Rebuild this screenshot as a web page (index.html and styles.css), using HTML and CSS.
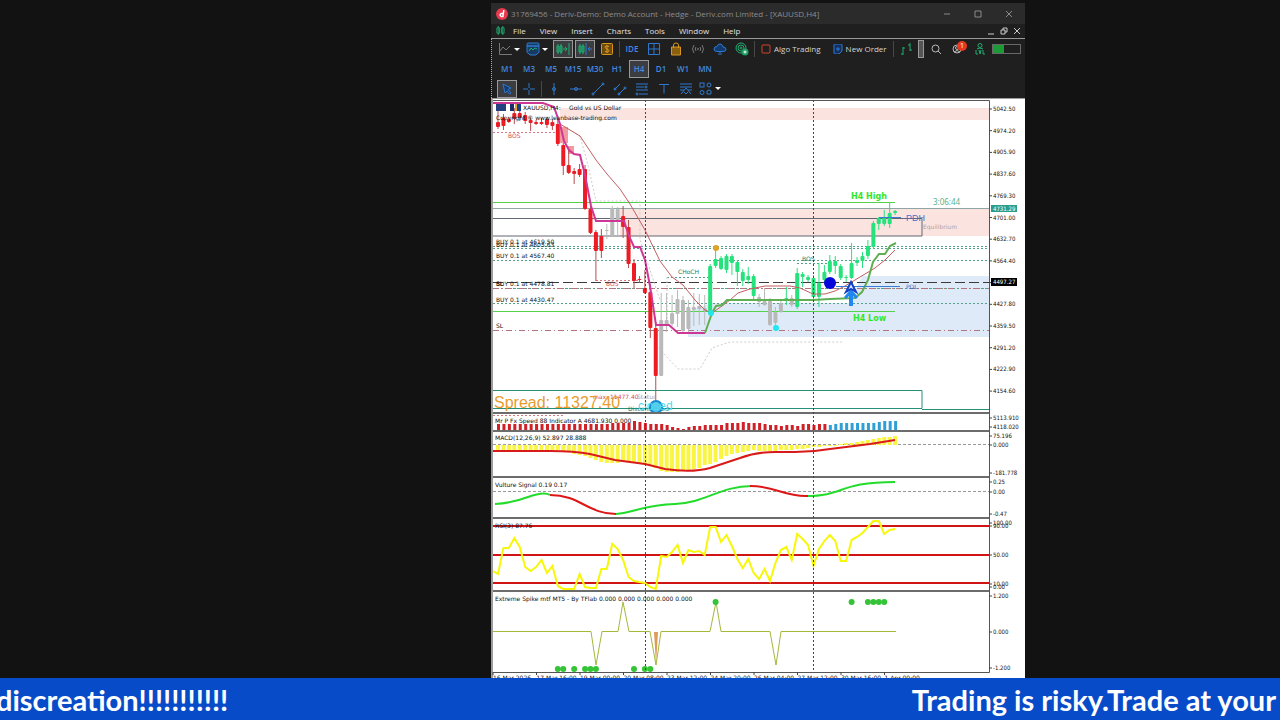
FILE: index.html
```
<!DOCTYPE html>
<html lang="en">
<head>
  <meta charset="UTF-8">
  <meta name="viewport" content="width=device-width, initial-scale=1.0">
  <title>XAUUSD H4 Live</title>
  <link rel="stylesheet" href="styles.css">
</head>
<body>
  <main class="stage">
    <section class="terminal">
      <header class="titlebar">
        <svg class="logo" viewBox="0 0 12 12"><circle cx="6" cy="6" r="6" fill="#e8394f"/><path d="M7.8 2.2 6.9 8.4H5.4a1.4 1.4 0 1 1 .3-2.8h1.4" fill="none" stroke="#fff" stroke-width="1.5"/></svg>
        <h1>31769456 - Deriv-Demo: Demo Account - Hedge - Deriv.com Limited - [XAUUSD,H4]</h1>
        <div class="win-buttons">
          <button aria-label="Minimize"><svg viewBox="0 0 8 8"><path d="M1 4h6"/></svg></button>
          <button aria-label="Maximize"><svg viewBox="0 0 8 8"><path d="M1 1h6v6H1z"/></svg></button>
          <button aria-label="Close"><svg viewBox="0 0 8 8"><path d="m1 1 6 6M7 1 1 7"/></svg></button>
        </div>
      </header>

      <nav class="menu">
        <svg class="menu-logo" viewBox="0 0 10 10"><path d="M2.500 0v10M7.500 0v10M1 2h3v6H1zM6 2h3v6H6z"/></svg>
        <a href="#">File</a>
        <a href="#">View</a>
        <a href="#">Insert</a>
        <a href="#">Charts</a>
        <a href="#">Tools</a>
        <a href="#">Window</a>
        <a href="#">Help</a>
        <div class="child-buttons">
          <button aria-label="Minimize chart"><svg viewBox="0 0 8 8"><path d="M1 7h6"/></svg></button>
          <button aria-label="Restore chart"><svg viewBox="0 0 8 8"><path d="M1 3h4v4H1zM3 3V1h4v4H5"/></svg></button>
          <button aria-label="Close chart"><svg viewBox="0 0 8 8"><path d="m1 1 6 6M7 1 1 7"/></svg></button>
        </div>
      </nav>

      <div class="tools">
        <div class="row">
          <button class="combo" aria-label="Chart type"><svg class="dim" viewBox="0 0 14 14"><path d="M1.500 1v11.500H14M2 9l3-4 3 3 4-4"/></svg><i class="caret"></i></button>
          <button class="combo" aria-label="Indicators"><svg viewBox="0 0 14 14"><path d="M1 4V2q0-1 1-1h10q1 0 1 1v2zM1 4v6q0 1 1 1l2 2h6l2-2q1 0 1-1V4z" fill="#173a63"/><path class="green" d="m3 9 2-3 2 2 2-2 2 1"/></svg><i class="caret"></i></button>
          <button class="on" aria-label="Auto scroll"><svg class="green" viewBox="0 0 14 14"><path d="M2 2v10M5 2v10M1 4h2v6H1zM4 4h2v6H4zM7 7h4M9 5l2 2-2 2M13 1v12"/></svg></button>
          <button class="on" aria-label="Chart shift"><svg viewBox="0 0 14 14"><path class="green" d="M2 2v10M5 2v10M1 4h2v6H1zM4 4h2v6H4z"/><path d="M8 1v12M14 7h-4M12 5l-2 2 2 2"/></svg></button>
          <button aria-label="Market"><svg class="gold" viewBox="0 0 14 14"><rect x="1.500" y="1.500" width="11" height="11" rx="1" fill="#6e4b0c"/><path d="M9 4.500q-4-1.500-4 .7c0 2 4 1.600 4 3.600q0 2-4 .7M7 3v8"/></svg></button>
          <span class="sep"></span>
          <button class="label">IDE</button>
          <button aria-label="Tile windows"><svg viewBox="0 0 14 14"><path d="M1.500 1.500h11v11h-11zM7 1.500v11M1.500 7h11"/></svg></button>
          <button aria-label="Shop"><svg class="gold" viewBox="0 0 14 14"><path d="M2.500 5h9v8h-9z" fill="#8a5f12"/><path d="M4.500 6V3q0-2 2.500-2t2.500 2v3"/></svg></button>
          <button aria-label="Signals"><svg class="dim" viewBox="0 0 14 14"><path d="M3 3q-3 4 0 8M11 3q3 4 0 8M5 5q-1.500 2 0 4M9 5q1.500 2 0 4"/><circle cx="7" cy="7" r=".6"/></svg></button>
          <button aria-label="VPS"><svg viewBox="0 0 14 14"><path d="M4 9.500Q1 9.500 1 7t3-2.500Q5 1 8 2.200q2 .8 2 2.800 3 0 3 2.300T10 9.500zM7 9v2M5 12h4" fill="#123c70"/></svg></button>
          <button aria-label="Community"><svg viewBox="0 0 14 14"><g class="green"><circle cx="6" cy="6" r="5"/><circle cx="6" cy="6" r="3"/><circle cx="6" cy="6" r="1"/></g><circle cx="10" cy="10" r="3.500" fill="#1f9d62" stroke="none"/><path d="M8.500 10h3M10 8.500v3" stroke="#fff"/></svg></button>
          <span class="sep"></span>
          <button class="text algo"><svg viewBox="0 0 10 10"><rect x="1" y="1" width="8" height="8" rx="1"/></svg><span>Algo Trading</span></button>
          <button class="text"><svg viewBox="0 0 10 10"><path d="M1 1q0-1 1-1h6q1 0 1 1v6L6 10H2q-1 0-1-1z" fill="#14305a"/><path d="M5 3v4M3 5h4"/></svg><span>New Order</span></button>
          <span class="sep"></span>
          <button aria-label="Depth"><svg class="green" viewBox="0 0 14 14"><path d="M4 5v8M2 12h2M4 6h2M11 1v8M9 3h2M11 8h2"/></svg></button>
          <span class="grip"></span>
          <div class="status">
            <button aria-label="Search"><svg class="light" viewBox="0 0 14 14"><circle cx="6.500" cy="6.500" r="3.500"/><path d="m9 9 3 3"/></svg></button>
            <button class="account" aria-label="Account"><svg class="light" viewBox="0 0 14 14"><circle cx="6" cy="7" r="4"/><circle cx="6" cy="6" r="1.500"/><path d="M3 10q3-3 6 0"/></svg><span class="badge">1</span></button>
            <button aria-label="Level"><svg class="green" viewBox="0 0 14 14"><circle cx="7" cy="3.500" r="2"/><path d="M4 7q3-2 6 0M3 8v4h2M6 8l1 4 1-4M10 8v4h2"/></svg></button>
            <span class="meter"></span>
          </div>
        </div>

        <div class="row frames">
          <button>M1</button><button>M3</button><button>M5</button><button>M15</button><button>M30</button><button>H1</button><button class="on">H4</button><button>D1</button><button>W1</button><button>MN</button>
        </div>

        <div class="row draw">
          <button class="on" aria-label="Cursor"><svg viewBox="0 0 14 14"><path d="m3 2 8 4-3 1.500 3 3.500-1.500 1L7 9l-2 2z" fill="#123c70"/></svg></button>
          <button aria-label="Crosshair"><svg viewBox="0 0 14 14"><path d="M7 1v5M7 8v5M1 7h5M8 7h5"/></svg></button>
          <span class="sep"></span>
          <button aria-label="Vertical line"><svg viewBox="0 0 14 14"><path d="M7 1v12"/><circle cx="7" cy="7" r="1.500"/></svg></button>
          <button aria-label="Horizontal line"><svg viewBox="0 0 14 14"><path d="M1 7h12"/><circle cx="7" cy="7" r="1.500"/></svg></button>
          <button aria-label="Trend line"><svg viewBox="0 0 14 14"><path d="m2 12 10-10"/><circle cx="2" cy="12" r="1"/><circle cx="12" cy="2" r="1"/></svg></button>
          <button aria-label="Channel"><svg viewBox="0 0 14 14"><path d="m1 8 6-6M5 13l7-7"/><circle cx="2" cy="7" r="1"/><circle cx="6" cy="12" r="1"/><circle cx="12" cy="6" r="1"/></svg></button>
          <button aria-label="Fibonacci"><svg viewBox="0 0 14 14"><path d="M1 2h12M1 5h8M1 8h12M4 12h9"/><circle cx="2" cy="12" r="1"/><circle cx="11" cy="5" r="1"/></svg></button>
          <button aria-label="Text"><svg viewBox="0 0 14 14"><path d="M2 2.500h10M7 2.500v9"/></svg></button>
          <button aria-label="Pitchfork"><svg viewBox="0 0 14 14"><path d="M1 2h12M1 5h12M1 8h4M9 8h4M2 12l5-6 5 6M5 10l2 2 2-2"/></svg></button>
          <button class="combo" aria-label="Shapes"><svg viewBox="0 0 14 14"><rect x="1" y="1" width="4" height="4"/><circle cx="10" cy="3" r="2"/><circle cx="3" cy="10.500" r="2"/><path d="m8 9 2-1 2 1v3H8z"/></svg><i class="caret"></i></button>
        </div>
      </div>

      <svg class="chart" viewBox="491 98 534 580" role="img" aria-label="Gold vs US Dollar, H4">
        <rect class="frame" x="491" y="98" width="534" height="580"/>
        <rect class="paper" x="493" y="99" width="532" height="579"/>

        <!-- supply and demand zones -->
        <rect class="supply" x="560" y="108" width="429" height="12"/>
        <rect class="supply" x="620" y="208" width="369" height="28"/>
        <path class="demand" d="M688 337V311L712 303H850L862 276H989V337z"/>
        <g class="mitigated">
          <rect x="560" y="127" width="8" height="16"/><rect x="568" y="146" width="6" height="8"/>
        </g>

        <!-- levels -->
        <path class="green-line" d="M493 202.500H895M493 311.500H895"/>
        <path class="bid" d="M493 208.500H989"/>
        <path class="box" d="M493 218.500H922V236H493"/>
        <path class="position" d="M493 246.500H989M493 248.500H989M493 260.500H989M493 288.500H989M493 303.500H989"/>
        <path class="stop" d="M493 288.500H989M493 330.500H989"/>
        <path class="long-dash" d="M493 282.500H989"/>
        <path class="bos-line" d="M493 132.500H556M596 280.500H640"/>
        <path class="position" d="M667 277.500H711M797 263.500H830"/>
        <path class="teal-line" d="M493 390.500H922V408.500H493M922 409.500H989"/>
        <path class="faint-line" d="M565 127L580 136 588 165 596 201H640V240L660 300M667 277V325M656 345L667 357 678 369H700L712 348 730 342H842"/>

        <g id="candles"></g>

        <path class="ma" d="M560 124L580 136 596 160 607 174 620 189 630 204 645 230 660 261 672 277 683 285 695 300 705 310 712 313 722 306 730 300 738 293 750 289 765 286 790 286 800 288 813 294 825 294 835 291 845 286 860 277 875 268 885 260 895 250"/>
        <path class="trend-down" d="M493 103H543L554 107 560 124 564 141 569 150 574 154 580 155 585 175 591 206 596 221H624L629 236 634 247H640L645 260 650 286 656 325H669L678 333H705"/>
        <path class="trend-up" d="M705 333L712 313 716 306 722 305 727 300H813L830 299 855 298 862 292 868 280 873 262 879 254H885L890 246 896 243"/>
        <path class="blue-line" d="M836 286.500H900M879 217.500H901"/>
        <circle cx="716" cy="248" r="3" fill="#dfa326"/>
        <circle cx="711" cy="313" r="3" fill="#22e6e6"/>
        <circle cx="776" cy="328" r="3" fill="#22e6f0"/>
        <circle cx="830" cy="283" r="6" fill="#0505dc"/>
        <path fill="#1e88f0" d="M851 289l7 8-2 2-3-3v10h-4v-10l-3 3-2-2z"/>
        <path fill="#dff0ff" stroke="#1240c8" stroke-width="2" d="M851 282l5 10-5-3-5 3z"/>

        <!-- labels on the price chart -->
        <g class="small">
          <path d="M496 104h10v7h-10z" fill="#26417d"/><path d="M510 104h4v7h-4z" fill="#1b2d6d"/><path d="M515 104h5v7h-5z" fill="#dfa020"/><path d="M517 104h4v7h-4z" fill="#14408c"/>
          <text x="523" y="110">XAUUSD,H4:</text>
          <text x="569" y="110">Gold vs US Dollar</text>
          <text x="496" y="120">Copyright © www.leanbase-trading.com</text>
          <text x="496" y="244">BUY 0.1 at 4619.50</text>
          <text x="496" y="247">BUY 0.1 at 4605.63</text>
          <text x="496" y="258">BUY 0.1 at 4567.40</text>
          <text x="496" y="286">BUY 0.1 at 4478.81</text>
          <text x="496" y="286">SL</text>
          <text x="496" y="302">BUY 0.1 at 4430.47</text>
          <text x="496" y="328">SL</text>
          <text class="red" x="508" y="138">BOS</text>
          <text class="red" x="606" y="286">BOS</text>
          <text class="teal" x="678" y="274">CHoCH</text>
          <text class="teal" x="802" y="261">BOS</text>
          <text class="pale" x="923" y="229">Equilibrium</text>
          <text class="blue" x="906" y="289">PDL</text>
          <text class="red" x="593" y="399">max: 11477.40</text>
          <text class="pale" x="637" y="399">Status</text>
          <text class="teal" x="628" y="411">Disconnected</text>
        </g>
        <text class="pdh" x="906" y="221">PDH</text>
        <text class="level-name" x="851" y="199">H4 High</text>
        <text class="level-name" x="853" y="321">H4 Low</text>
        <text class="timer" x="933" y="205">3:06:44</text>
        <circle cx="656" cy="407" r="6" fill="#55c6ee" stroke="#1889cf" stroke-width="2"/>
        <text class="closed" x="638" y="410">closed</text>
        <text class="spread" x="494" y="408">Spread: 11327.40</text>

        <!-- indicator windows -->
        <rect class="paper" x="493" y="412" width="496" height="260"/>
        <path class="bos-line" d="M493 415.500H565"/>
        <path class="zero" d="M493 444.500H989M493 491.500H989"/>
        <g id="speed"></g>
        <g id="macd"></g>
        <path class="red-line" d="M493 451H550Q575 451 590 454L615 460 645 464 665 469Q692 473 710 468L740 458Q756 452 775 452H795Q813 452 830 449L870 444 895 440"/>
        <g class="signal">
          <path class="up" d="M495 504Q512 503 528 497T550 495M616 514C635 512 645 505 675 504S720 486 752 486M806 496C845 496 838 482 895 482"/>
          <path class="down" d="M550 495C580 495 588 514 616 514M750 486C776 486 784 497 808 496"/>
        </g>
        <path class="rsi-level" d="M493 526H989M493 555H989M493 583H989"/>
        <polyline id="rsi" class="rsi"/>
        <path d="M654 632h4l-2 32z" fill="#e09a5a"/>
        <path class="spike" d="M493 631.500H591L596 665 602 631.500H618L623 602 629 631.500H650L656 665 661 631.500H710L716 602 721 631.500H770L776 665 781 631.500H896"/>
        <g id="dots" fill="#35c337"></g>

        <path class="divider" d="M493 413H990M493 431H990M493 477H990M493 518H990M493 591H990"/>
        <path class="axis" d="M493 100.500H989.500V672.500H493"/>
        <path class="day" d="M645.500 100V672M813.500 100V672"/>
        <g class="small">
          <text x="495" y="423">Mr P Fx Speed 88 Indicator A 4681.930 0.000</text>
          <text x="495" y="440">MACD(12,26,9) 52.897 28.888</text>
          <text x="495" y="487">Vulture Signal 0.19 0.17</text>
          <text x="495" y="528">RSI(3) 87.76</text>
          <text x="495" y="601">Extreme Spike mtf MT5 - By TFlab 0.000 0.000 0.000 0.000 0.000</text>
        </g>
        <g id="scale" class="small"></g>
        <g id="dates" class="small"></g>
      </svg>
    </section>
  </main>

  <footer class="ticker">
    <span>discreation!!!!!!!!!!!</span>
    <span>Trading is risky.Trade at your</span>
  </footer>

  <script src="chart.js"></script>
</body>
</html>
```
FILE: styles.css
```
* { margin: 0; padding: 0; box-sizing: border-box; }

body {
  display: flex;
  flex-direction: column;
  height: 100vh;
  background: #121212;
  color: #ddd;
  font-family: "Open Sans", sans-serif;
  font-size: 8px;
  overflow: hidden;
}

button {
  background: none;
  border: 1px solid transparent;
  color: inherit;
  font: inherit;
  cursor: pointer;
}

svg { display: block; }

.stage {
  flex: 1;
  min-height: 0;
  display: grid;
  grid-template-columns: 491fr 534fr 255fr;
  padding-top: 3px;
  overflow: hidden;
}

.terminal {
  grid-column: 2;
  background: #1f1f1f;
}

/* title and menu */
.titlebar {
  display: flex;
  align-items: center;
  height: 21px;
  padding: 0 7px 0 5px;
  gap: 3px;
  background: #2b2b2b;
  color: #8c8c8c;
}

.titlebar h1 { font-size: 8px; font-weight: normal; white-space: nowrap; }
.logo { width: 12px; height: 12px; }
.win-buttons { display: flex; gap: 13px; margin-left: auto; }
.win-buttons button, .child-buttons button { display: grid; place-items: center; }
.win-buttons button { width: 18px; height: 18px; }
.win-buttons svg, .child-buttons svg { width: 8px; height: 8px; fill: none; stroke: #8a8a8a; }

.menu {
  display: flex;
  align-items: center;
  height: 15px;
  padding: 0 3px 1px 5px;
  border-bottom: 1px solid #999;
}

.menu a { color: #e0e0e0; text-decoration: none; margin-right: 14px; }
.menu-logo { width: 9px; height: 9px; margin-right: 8px; fill: none; stroke: #1fa56c; }
.child-buttons { display: flex; gap: 3px; margin-left: auto; }
.child-buttons button { width: 10px; height: 12px; }
.child-buttons svg { stroke: #ccc; }

/* toolbars */
.tools { border-left: 1px dotted #aaa; padding-left: 5px; color: #4489dd; }
.row { display: flex; align-items: center; gap: 2px; height: 20px; }
.row.draw { height: 19px; }

.row button {
  display: grid;
  place-items: center;
  width: 20px;
  height: 18px;
  flex: none;
}

.row svg { width: 14px; height: 14px; fill: none; stroke: #2f79cf; }
.row .dim { stroke: #777; }
.row .light { stroke: #bbb; }
.row .green { stroke: #1fae72; }
.row .gold { stroke: #d69620; }
.row .on { background: #3b3d40; border-color: #9a9a9a; }
.row .combo { display: flex; align-items: center; width: 26px; gap: 2px; }
.frames button, .row .label { padding-bottom: 2px; font-weight: 600; }
.caret { border: 3px solid transparent; border-top-color: #fff; border-bottom: 0; }
.sep { width: 1px; height: 16px; background: #484848; }

.row .text {
  display: flex;
  align-items: center;
  gap: 3px;
  width: auto;
  padding: 0 3px;
  color: #d5d5d5;
}

.row .text svg { width: 10px; height: 10px; }
.row .text span { padding-bottom: 1px; }
.row .text.algo svg { stroke: #d5442d; }
.row .text.algo { padding-right: 5px; }
.grip { width: 6px; height: 18px; border: 1px solid #999; background: #555; }
.status { display: flex; align-items: center; gap: 2px; margin-left: auto; padding-right: 4px; }
.account { position: relative; }

.badge {
  position: absolute;
  top: 0;
  right: 0;
  width: 10px;
  height: 10px;
  border-radius: 50%;
  background: #e9381f;
  color: #fff;
  font-size: 7px;
  line-height: 10px;
}

.meter {
  width: 29px;
  height: 10px;
  border: 1px solid #686868;
  background: linear-gradient(90deg, #1d9a38 42%, transparent 42%);
}

/* chart */
.chart { width: 100%; fill: none; }
.frame { fill: #9c9c9c; }
.paper { fill: #fff; }
.axis { stroke: #555; }
.supply { fill: #fbe4e0; }
.demand { fill: #dfeaf8; }
.mitigated { fill: #f29a9e; }
.green-line { stroke: #55d24c; }
.bid { stroke: #8fa6a6; }
.box { stroke: #626773; }
.position { stroke: #55a08a; stroke-dasharray: 2 2; }
.stop { stroke: #b3747e; stroke-dasharray: 6 3 1 3; }
.long-dash { stroke: #3a3a3a; stroke-dasharray: 10 4; }
.bos-line { stroke: #d9777f; stroke-dasharray: 2 2; }
.teal-line { stroke: #259178; }
.faint-line { stroke: #ccc; stroke-dasharray: 2 2; }
.blue-line { stroke: #3a7bd5; }
.ma { stroke: #c25e62; }
.trend-down { stroke: #cf3795; stroke-width: 2; }
.trend-up { stroke: #5faf52; stroke-width: 2; }
.day { stroke: #444; stroke-dasharray: 2 2; }
.divider { stroke: #6c6c6c; stroke-width: 2; }
.zero { stroke: #999; stroke-dasharray: 3 2; }
.red-line { stroke: #d91a1a; stroke-width: 2; }
.signal { stroke-width: 2; }
.signal .up { stroke: #22dc2c; }
.signal .down { stroke: #dd1717; }
.rsi-level { stroke: #d01414; stroke-width: 2; }
.rsi { stroke: #f7f70c; stroke-width: 2; }
.spike { stroke: #a4b83c; }

.small { font-family: "DejaVu Sans", sans-serif; font-size: 6px; }
.small text { fill: #111; }
.small .red { fill: #d94b4c; }
.small .teal { fill: #16806a; }
.small .pale { fill: #b0a0a3; }
.small .blue { fill: #2e72c9; }
.small .inverse { fill: #fff; }
#scale { font-family: "DejaVu Sans Condensed", "DejaVu Sans", sans-serif; }
.pdh { fill: #4f6cc9; font-family: "Liberation Sans", sans-serif; font-size: 9px; }
.level-name { fill: #2fe62b; font-family: "DejaVu Sans", sans-serif; font-size: 8px; font-weight: bold; }
.timer { fill: #55b291; font-family: "Noto Sans", sans-serif; font-size: 8px; }
.spread { fill: #e99c2d; font-family: "Liberation Sans", sans-serif; font-size: 16px; }
.closed { fill: #4fdceb; font-family: "Liberation Sans", sans-serif; font-size: 12px; }

/* warning ticker */
.ticker {
  display: flex;
  justify-content: space-between;
  align-items: center;
  height: 42px;
  padding-right: 4px;
  background: #084bc9;
  color: #fff;
  font-family: Lato, sans-serif;
  font-size: 29px;
  font-weight: bold;
  white-space: nowrap;
}

.ticker span:first-child { margin-left: -4px; }
```
FILE: chart.js
```
const NS = 'http://www.w3.org/2000/svg';
const barX = i => 498 + i * 5.44;

function add(parent, tag, attrs, text) {
  const el = document.createElementNS(NS, tag);
  for (const key in attrs) el.setAttribute(key, attrs[key]);
  if (text) el.textContent = text;
  document.getElementById(parent).appendChild(el);
}

// high, open, close, low, colour (r = sell, g = buy, n = neutral)
const candles = [
  [111,122,127,129,'r'],[114,118,126,130,'r'],[117,119,122,123,'r'],[108,113,119,124,'r'],[110,113,118,121,'r'],
  [112,115,121,124,'r'],[117,120,123,131,'r'],[120,122,124,125,'r'],[118,122,124,125,'r'],[117,119,125,128,'r'],
  [119,122,126,130,'r'],[117,124,144,146,'r'],[143,145,166,175,'r'],[150,165,173,174,'r'],[168,171,174,184,'r'],
  [164,169,175,177,'r'],[165,169,209,210,'r'],[206,209,233,234,'r'],[230,232,251,281,'r'],[229,236,251,258,'r'],
  [224,230,231,239,'n'],[206,208,236,237,'n'],[207,209,221,235,'n'],[206,216,227,238,'r'],[220,227,264,268,'r'],
  [259,263,281,288,'r'],[276,279,280,283,'r'],[270,288,293,294,'r'],[284,292,328,338,'r'],[322,328,376,407,'r'],
  [293,320,376,376,'n'],[293,320,325,332,'n'],[295,313,324,326,'n'],[290,299,314,327,'n'],[296,300,331,333,'n'],
  [300,307,329,332,'n'],[293,307,310,326,'n'],[294,306,309,325,'n'],[295,308,311,325,'n'],[264,266,313,315,'g'],
  [248,259,266,268,'g'],[256,258,269,270,'g'],[254,256,270,273,'g'],[254,256,263,275,'g'],[260,262,272,286,'g'],
  [269,272,281,286,'g'],[267,276,280,284,'g'],[274,276,296,299,'g'],[294,297,302,307,'n'],[288,301,305,306,'n'],
  [298,301,325,326,'n'],[307,312,323,328,'n'],[300,303,312,313,'n'],[287,298,301,305,'g'],[295,298,305,307,'n'],
  [268,273,307,309,'g'],[272,274,277,287,'g'],[275,277,280,282,'g'],[275,278,297,302,'g'],[263,283,297,307,'g'],
  [265,272,280,283,'g'],[255,261,272,274,'g'],[256,261,266,274,'g'],[264,266,278,280,'g'],[275,277,278,282,'g'],
  [243,263,278,279,'g'],[257,260,263,266,'g'],[252,256,261,268,'g'],[240,246,256,259,'g'],[221,223,247,249,'g'],
  [217,218,224,230,'g'],[210,218,224,226,'g'],[203,213,224,228,'g'],[210,211,213,215,'g']
];
const colours = { r: '#ed1c24', g: '#26e27c', n: '#b9b9b9' };

candles.forEach(([high, open, close, low, kind], i) => {
  const x = barX(i);
  add('candles', 'path', { d: `M${x} ${high}V${low}`, stroke: kind === 'r' ? '#b05050' : colours[kind] });
  add('candles', 'rect', { x: x - 2, y: open, width: 4, height: close - open, rx: 1, fill: colours[kind] });
});

// speed histogram, height of each bar
const speed = [
  6,6,6,6,6,6,6,6,6,6,6,6,6,6,6,6,6,6,6,6,6,7,7,7,7,9,8,7,6,6,6,5,3,2,1,3,4,4,5,5,
  5,5,7,7,7,8,7,7,7,6,5,5,4,5,5,4,6,6,5,6,6,5,6,7,7,7,7,7,7,7,8,9,9,9
];
speed.forEach((h, i) => {
  add('speed', 'rect', { x: barX(i) - 1, y: 430 - h, width: 3, height: h, fill: i > 60 ? '#2f9fd6' : '#cf2127' });
});

// MACD histogram, distance from the zero line (negative is above)
const macd = [
  6,6,6,6,6,6,6,6,5,5,5,5,6,7,9,10,11,13,15,17,18,18,18,17,17,18,18,19,20,23,26,27,27,27,26,25,24,23,
  20,19,17,14,11,9,8,7,6,5,6,6,6,6,5,5,5,4,4,3,2,2,1,1,1,-1,-2,-2,-3,-4,-5,-6,-7,-8,-8,-9
];
macd.forEach((v, i) => {
  add('macd', 'rect', { x: barX(i) - 2, y: v > 0 ? 445 : 445 + v, width: 4, height: Math.abs(v), fill: '#faf543' });
});

const rsi = [
  574,548,548,538,547,567,571,567,560,573,566,586,589,589,589,574,587,588,588,569,569,544,549,560,577,
  581,582,583,587,589,556,557,552,545,563,550,552,551,555,527,527,542,535,546,559,568,559,573,579,569,
  581,563,550,547,560,534,539,545,566,549,541,535,541,561,561,540,537,533,527,521,521,534,530,529
];
document.getElementById('rsi').setAttribute('points', '493,571 ' + rsi.map((y, i) => barX(i) + ',' + y).join(' '));

[11, 12, 14, 16, 17, 18, 25, 27, 28].forEach(i => add('dots', 'circle', { cx: barX(i), cy: 669, r: 3 }));
[40, 65, 68, 69, 70, 71].forEach(i => add('dots', 'circle', { cx: barX(i), cy: 602, r: 3 }));

// price scale
const prices = [
  '5042.50', '4974.20', '4905.90', '4837.60', '4769.30', '4701.00', '4632.70',
  '4564.40', '', '4427.80', '4359.50', '4291.20', '4222.90', '4154.60'
];
const levels = prices.map((p, i) => [p, 109 + i * 21.7]).concat([
  ['5113.910', 418], ['4118.020', 427], ['75.196', 436], ['0.000', 445], ['-181.778', 473],
  ['0.25', 482], ['0.00', 492], ['-0.47', 514], ['100.00', 523], ['90.00', 526], ['50.00', 555],
  ['10.00', 584], ['0.00', 587], ['1.200', 596], ['0.000', 632], ['-1.200', 668]
]);
levels.forEach(([label, y]) => {
  add('scale', 'path', { d: `M989 ${y}h3`, stroke: '#444' });
  add('scale', 'text', { x: 993, y: y + 2 }, label);
});
add('scale', 'rect', { x: 991, y: 205, width: 26, height: 7, fill: '#2c9c8c' });
add('scale', 'text', { x: 993, y: 211, class: 'inverse' }, '4731.29');
add('scale', 'rect', { x: 991, y: 278, width: 26, height: 8, fill: '#000' });
add('scale', 'text', { x: 993, y: 284, class: 'inverse' }, '4497.27');

const dates = [
  '16 Mar 2026', '17 Mar 16:00', '19 Mar 00:00', '20 Mar 08:00', '23 Mar 12:00',
  '24 Mar 20:00', '26 Mar 04:00', '27 Mar 12:00', '30 Mar 16:00', '1 Apr 00:00'
];
dates.forEach((label, i) => {
  const x = 493 + i * 43.5;
  add('dates', 'path', { d: `M${x} 672v3`, stroke: '#444' });
  add('dates', 'text', { x: x, y: 680 }, label);
});
```
